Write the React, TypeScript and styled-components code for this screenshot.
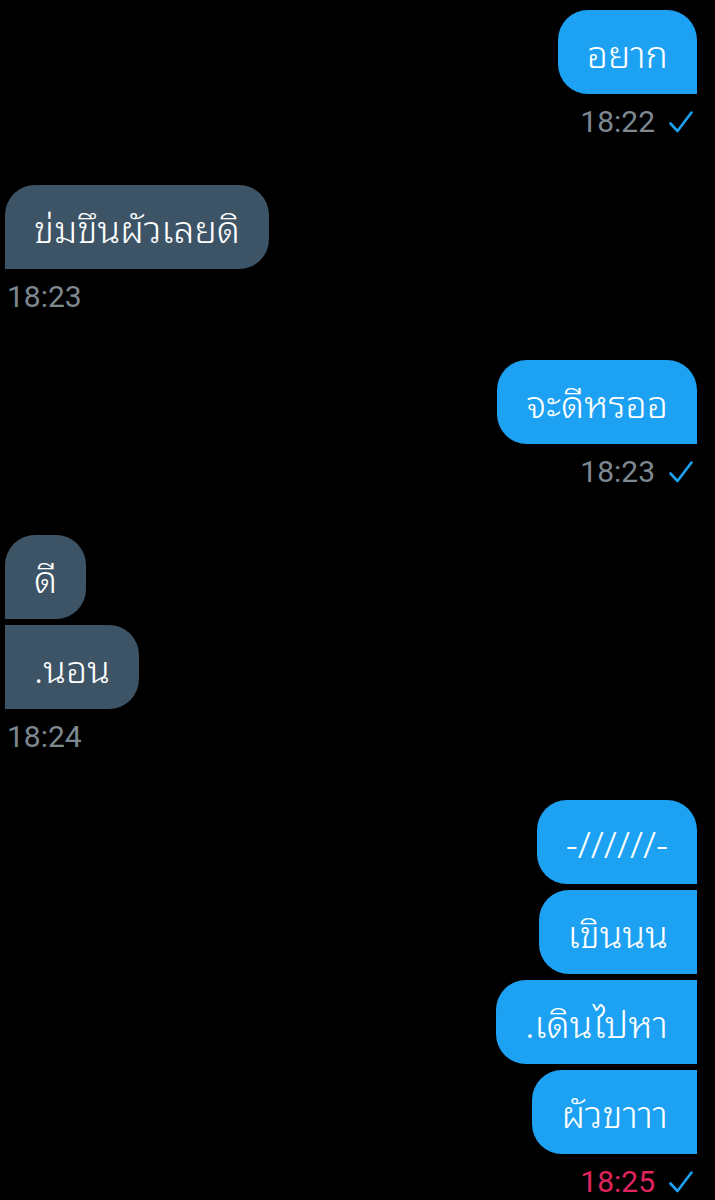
import React from 'react';
import styled, { createGlobalStyle, css } from 'styled-components';

const GlobalStyle = createGlobalStyle`
  html, body {
    margin: 0;
    padding: 0;
    background: #000;
  }
  body {
    font-family: "Noto Sans Thai Looped", "Noto Looped Thai", Loma, Garuda, Waree, Kinnari, "Noto Sans Thai", "Noto Sans", Roboto, sans-serif;
  }
`;

type Side = 'in' | 'out';

const blue = '#1da1f2';
const slate = '#3d5466';

// Page

const Page = styled.div`
  min-height: 1200px;
  box-sizing: border-box;
  padding: 10px 18px 0 5px;
  display: flex;
  flex-direction: column;
  gap: 43px;
  background: #000;
`;

// Group

const Group = styled.div<{ $side: Side }>`
  display: flex;
  flex-direction: column;
  align-items: ${p => (p.$side === 'out' ? 'flex-end' : 'flex-start')};
  gap: 6px;
`;

// Bubble

const Bubble = styled.div<{ $side: Side; $first?: boolean }>`
  box-sizing: border-box;
  height: 84px;
  padding: 0 29px 2px;
  display: flex;
  align-items: center;
  color: #fff;
  font-size: 37.5px;
  font-weight: 350;
  line-height: 46px;
  white-space: nowrap;
  background: ${p => (p.$side === 'out' ? blue : slate)};
  border-radius: 30px;
  ${p =>
    p.$side === 'out'
      ? css`
          border-bottom-right-radius: 0;
          ${!p.$first && 'border-top-right-radius: 0;'}
        `
      : css`
          border-bottom-left-radius: 0;
          ${!p.$first && 'border-top-left-radius: 0;'}
        `}
`;

// Meta (time + read mark)

const Meta = styled.div<{ $side: Side }>`
  margin-top: 2px;
  display: flex;
  align-items: center;
  gap: 14px;
  padding: ${p => (p.$side === 'out' ? '0 4px 0 0' : '0 0 0 2px')};
`;

const Time = styled.span<{ $failed?: boolean }>`
  font-family: Roboto, "Liberation Sans", sans-serif;
  font-size: 30px;
  line-height: 40px;
  color: ${p => (p.$failed ? '#e0245e' : '#7d8891')};
`;

const Check = () => (
  <svg width="24" height="22" viewBox="0 0 24 22" fill="none">
    <path
      d="M1.5 12.5 L8.5 20 L22.5 1.5"
      stroke={blue}
      strokeWidth="2.6"
      strokeLinecap="round"
      strokeLinejoin="round"
    />
  </svg>
);

type Msg = {
  side: Side;
  texts: string[];
  time: string;
  failed?: boolean;
};

const messages: Msg[] = [
  { side: 'out', texts: ['อยาก'], time: '18:22' },
  { side: 'in', texts: ['ข่มขึนผัวเลยดิ'], time: '18:23' },
  { side: 'out', texts: ['จะดีหรออ'], time: '18:23' },
  { side: 'in', texts: ['ดี', '.นอน'], time: '18:24' },
  {
    side: 'out',
    texts: ['-//////-', 'เขินนน', '.เดินไปหา', 'ผัวขาาา'],
    time: '18:25',
    failed: true,
  },
];

export default function App() {
  return (
    <>
      <GlobalStyle />
      <Page>
        {messages.map((m, i) => (
          <Group key={i} $side={m.side}>
            {m.texts.map((t, j) => (
              <Bubble key={j} $side={m.side} $first={j === 0}>
                {t}
              </Bubble>
            ))}
            <Meta $side={m.side}>
              <Time $failed={m.failed}>{m.time}</Time>
              {m.side === 'out' && <Check />}
            </Meta>
          </Group>
        ))}
      </Page>
    </>
  );
}
